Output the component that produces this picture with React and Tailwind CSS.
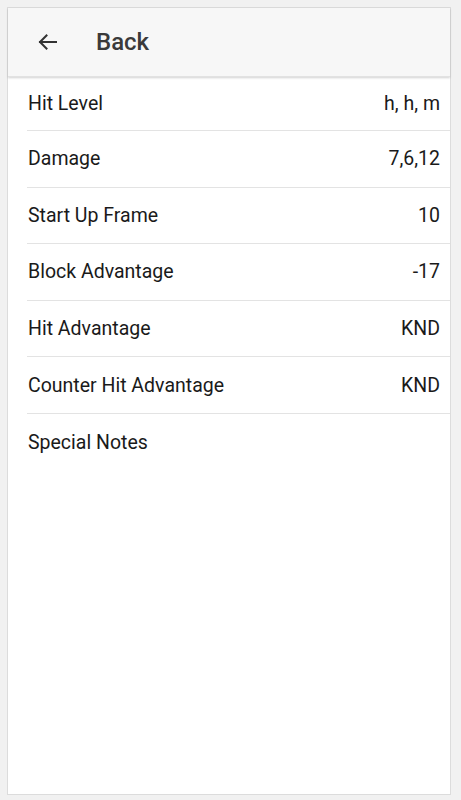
import React from "react";

const rows = [
  ["Hit Level", "h, h, m"],
  ["Damage", "7,6,12"],
  ["Start Up Frame", "10"],
  ["Block Advantage", "-17"],
  ["Hit Advantage", "KND"],
  ["Counter Hit Advantage", "KND"],
];

export default function App() {
  return (
    <div className="w-[461px] h-[800px] bg-[#f1f1f1] pt-[7px] pl-[7px]" style={{ fontFamily: "Roboto, 'Noto Sans', sans-serif" }}>
      <div className="w-[444px] h-[788px] border border-[#dcdcdc] bg-white flex flex-col">
        <div className="h-[69px] shrink-0 bg-[#f7f7f7] flex items-center shadow-[0_1px_2px_rgba(0,0,0,0.18)] relative z-10 border-b border-[#e2e2e2]">
          <svg className="ml-[27px]" width="24" height="24" viewBox="0 0 24 24" fill="none" stroke="#333" strokeWidth="2" strokeLinecap="square">
            <path d="M21 12H5" />
            <path d="M11.5 5.5L5 12L11.5 18.5" />
          </svg>
          <span className="ml-[37px] text-[24px] font-medium text-[#3a3a3a] leading-none">Back</span>
        </div>
        <div className="flex flex-col">
          {rows.map(([k, v], i) => (
            <div key={k} className={(i === 0 ? "h-[54px] " : "h-[56.6px] ") + "ml-[19px] border-b border-[#e3e3e3] flex items-center justify-between pr-[10px] pl-[1px] text-[19.5px] text-[#1a1a1a]"}>
              <span>{k}</span>
              <span>{v}</span>
            </div>
          ))}
          <div className="h-[56.6px] ml-[20px] flex items-center text-[19.5px] text-[#1a1a1a]">
            <span>Special Notes</span>
          </div>
        </div>
      </div>
    </div>
  );
}
